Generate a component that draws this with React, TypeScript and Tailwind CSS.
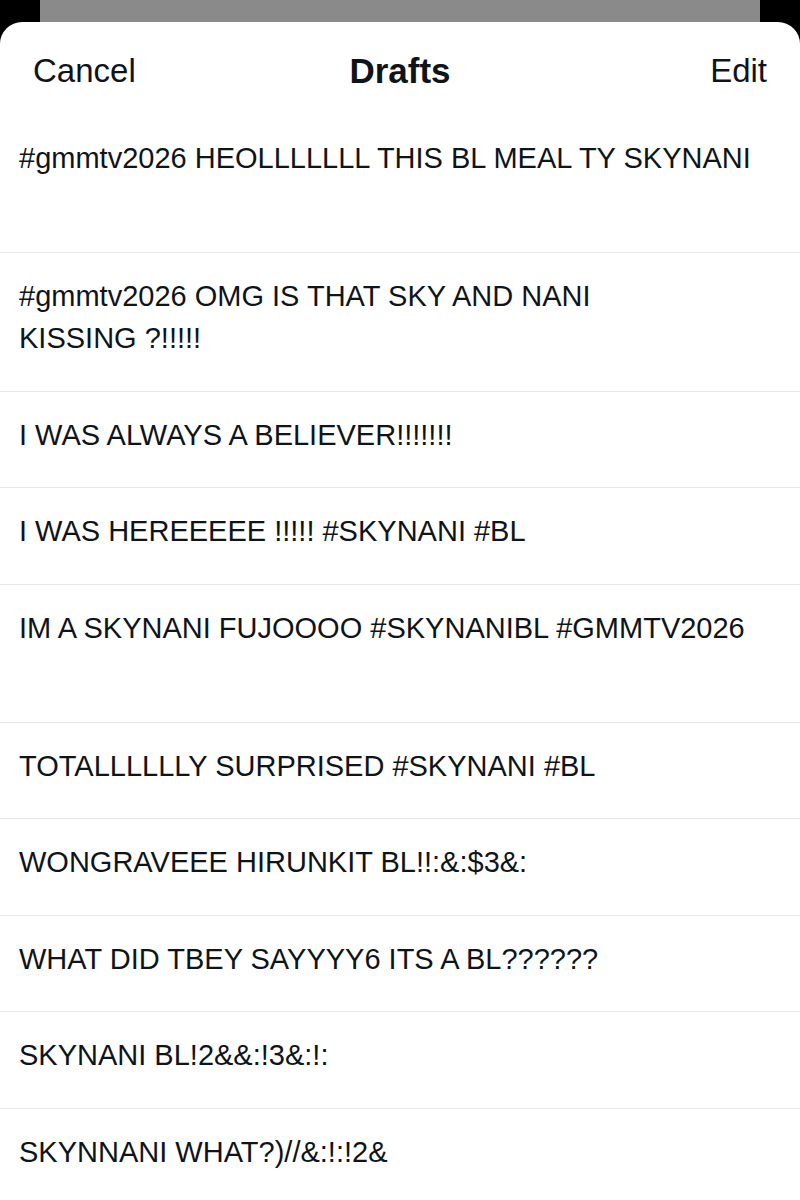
type Draft = { lines: string[] };

// Drafts keep their line breaks; a trailing empty line still takes a row of height
const DRAFTS: Draft[] = [
	{ lines: ["#gmmtv2026 HEOLLLLLLL THIS BL MEAL TY SKYNANI", ""] },
	{ lines: ["#gmmtv2026 OMG IS THAT SKY AND NANI", "KISSING ?!!!!!"] },
	{ lines: ["I WAS ALWAYS A BELIEVER!!!!!!!"] },
	{ lines: ["I WAS HEREEEEE !!!!! #SKYNANI #BL"] },
	{ lines: ["IM A SKYNANI FUJOOOO #SKYNANIBL #GMMTV2026", ""] },
	{ lines: ["TOTALLLLLLY SURPRISED #SKYNANI #BL"] },
	{ lines: ["WONGRAVEEE HIRUNKIT BL!!:&:$3&:"] },
	{ lines: ["WHAT DID TBEY SAYYYY6 ITS A BL??????"] },
	{ lines: ["SKYNANI BL!2&&:!3&:!:"] },
	{ lines: ["SKYNNANI WHAT?)//&:!:!2&"] },
];

function DraftRow({ draft }: { draft: Draft }) {
	return (
		<li className="border-b border-[#e7e7e7] pt-[22px] pb-[31.4px] pl-[19px] pr-4 last:border-b-0">
			{draft.lines.map((line, i) => (
				<p
					key={i}
					className="h-[42px] whitespace-nowrap text-[29px] leading-[42px] text-[#0f1419]"
				>
					{line || "\u00a0"}
				</p>
			))}
		</li>
	);
}

export default function App() {
	return (
		<div
			className="flex h-[1200px] w-[800px] flex-col overflow-hidden bg-black"
			style={{ fontFamily: '"Liberation Sans", Arial, sans-serif' }}
		>
			{/* card behind the sheet */}
			<div className="mx-[40px] h-[22px] shrink-0 bg-[#8a8a8a]" />

			<div className="flex flex-1 flex-col overflow-hidden rounded-t-[22px] bg-white">
				{/* Header */}
				<header className="grid h-[93px] shrink-0 grid-cols-[1fr_auto_1fr] items-center px-[33px] pt-[5px] text-[#0f1419]">
					<button type="button" className="justify-self-start text-[33px]">
						Cancel
					</button>
					<h1 className="text-[35px] font-bold">Drafts</h1>
					<button type="button" className="justify-self-end text-[33px]">
						Edit
					</button>
				</header>

				{/* Draft list */}
				<ul className="flex flex-col">
					{DRAFTS.map((draft, i) => (
						<DraftRow key={i} draft={draft} />
					))}
				</ul>
			</div>
		</div>
	);
}
